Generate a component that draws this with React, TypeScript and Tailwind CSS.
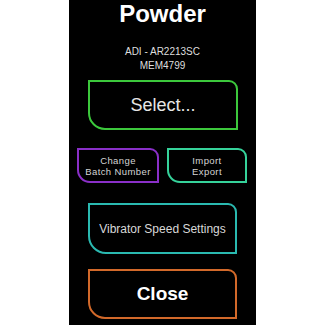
import React from "react"

const font = { fontFamily: '"Liberation Sans", Arial, sans-serif' }

export default function App() {
  return (
    <div className="w-[325px] h-[325px] bg-white flex justify-center" style={font}>
      <div className="w-[187px] h-[325px] bg-black flex flex-col">
        <h1 className="text-center text-white font-bold text-[24px] leading-[28px]">Powder</h1>

        <div className="mt-[17px] text-center text-[10px] leading-[14px] text-[#dedede]">
          <p>ADI - AR2213SC</p>
          <p>MEM4799</p>
        </div>

        <button className="mt-[7px] ml-[19px] w-[150px] h-[50px] border-2 border-[#3cc83c] rounded-tr-[9px] rounded-bl-[17px] text-[18px] font-normal text-[#e6e6e6]">
          Select...
        </button>

        <div className="mt-[18px] ml-[8px] flex gap-[8px]">
          <button className="w-[82px] h-[35px] border-2 border-[#8a2fc8] rounded-tr-[9px] rounded-bl-[13px] text-[9.5px] leading-[11px] tracking-[0.4px] font-normal text-[#d4d4d4]">
            Change
            <br />
            Batch Number
          </button>
          <button className="w-[80px] h-[35px] border-2 border-[#35d29a] rounded-tr-[9px] rounded-bl-[13px] text-[9.5px] leading-[11px] tracking-[0.4px] font-normal text-[#d4d4d4]">
            Import
            <br />
            Export
          </button>
        </div>

        <button className="mt-[20px] ml-[19px] w-[149px] h-[51px] border-2 border-[#2ab9b0] rounded-tr-[9px] rounded-bl-[18px] text-[12px] font-normal text-[#d8d8d8]">
          Vibrator Speed Settings
        </button>

        <button className="mt-[15px] ml-[19px] w-[149px] h-[50px] border-2 border-[#d2692a] rounded-tr-[9px] rounded-bl-[17px] text-[19px] font-bold text-white">
          Close
        </button>
      </div>
    </div>
  )
}
